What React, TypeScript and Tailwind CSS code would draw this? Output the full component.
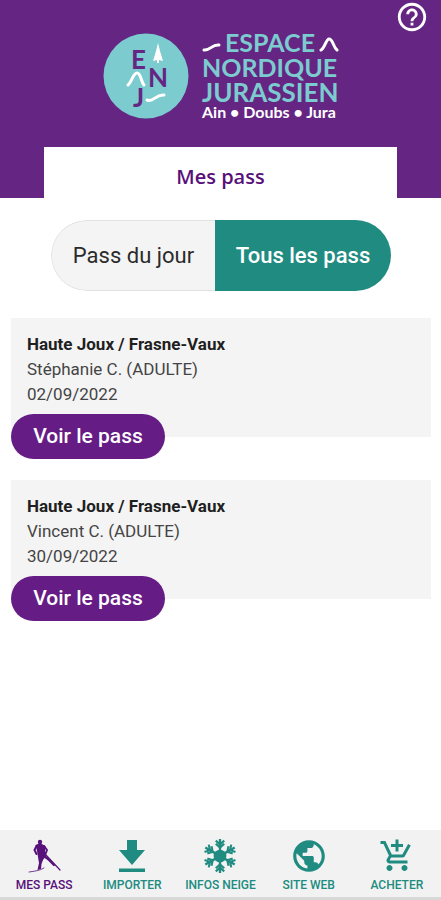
import type { ReactNode } from "react";
import { MdAddShoppingCart, MdHelpOutline, MdPublic } from "react-icons/md";

const passes = [
  { id: 1, area: "Haute Joux / Frasne-Vaux", holder: "Stéphanie C. (ADULTE)", date: "02/09/2022" },
  { id: 2, area: "Haute Joux / Frasne-Vaux", holder: "Vincent C. (ADULTE)", date: "30/09/2022" },
];

export default function App() {
  return (
    <div className="flex min-h-screen flex-col bg-white font-[Roboto,sans-serif]">
      <Header />
      <main className="flex-1 pt-[22px] pr-[10px] pb-6 pl-[11px]">
        <PassFilter />
        <div className="mt-[27px] flex flex-col gap-[21px]">
          {passes.map((pass) => (
            <PassCard key={pass.id} area={pass.area} holder={pass.holder} date={pass.date} />
          ))}
        </div>
      </main>
      <TabBar />
    </div>
  );
}

function Header() {
  return (
    <header className="relative flex flex-col items-center bg-[#652583] px-11 pt-[30px]">
      <button type="button" aria-label="Aide" className="absolute top-0 right-3 text-white">
        <MdHelpOutline size={34} />
      </button>
      <Logo />
      <h1 className="mt-[25px] w-full bg-white pt-[18px] pb-[9px] text-center font-['Open_Sans',sans-serif] text-[20px] leading-6 font-semibold text-[#58107a]">
        Mes pass
      </h1>
    </header>
  );
}

function Logo() {
  return (
    <div className="flex h-[92px] gap-3 font-[Lato,sans-serif] font-bold whitespace-nowrap">
      <Emblem />
      <div className="text-[25px] leading-[25px] text-[#7ccbcf]">
        <div className="flex items-start gap-1">
          <svg width="19" height="25" viewBox="0 0 19 25" fill="none" stroke="#fff" strokeWidth="3" strokeLinecap="round">
            <path d="M2 20 C8 21 10 14 17 15" />
          </svg>
          <span>ESPACE</span>
          <svg width="20" height="25" viewBox="0 0 20 25" fill="none" stroke="#fff" strokeWidth="3" strokeLinecap="round">
            <path d="M2 20 C6 18 7 9 10 9 C14 9 14 17 18 20" />
          </svg>
        </div>
        <div>NORDIQUE</div>
        <div className="text-[26px]">JURASSIEN</div>
        <div className="text-[16px] leading-[14px] text-white">Ain • Doubs • Jura</div>
      </div>
    </div>
  );
}

function Emblem() {
  return (
    <svg width="88" height="92" viewBox="0 0 88 92" fill="none">
      <circle cx="44" cy="46" r="42.5" fill="#7ccbcf" />
      <g fill="#652583" fontSize="26">
        <text x="29" y="39">E</text>
        <text x="46" y="57">N</text>
        <text x="31" y="77">J</text>
      </g>
      <path d="M56 13 L58 21 L61 31 L57 30 V33 H55 V30 L51 31 L54 21 Z" fill="#fff" />
      <g stroke="#fff" strokeWidth="3" strokeLinecap="round" strokeLinejoin="round">
        <path d="M26 55 C30 52 31 43 35 43 C39 43 39 52 42 55" />
        <path d="M45 70 C52 73 53 64 62 65" />
      </g>
    </svg>
  );
}

function PassFilter() {
  return (
    <div className="mx-10 flex h-[71px] overflow-hidden rounded-full text-[22px]">
      <button type="button" className="w-[164px] rounded-l-full border border-r-0 border-[#e2e2e2] bg-[#f4f4f4] text-[#2b2b2b]">
        Pass du jour
      </button>
      <button type="button" className="flex-1 bg-[#208b80] font-medium text-white">
        Tous les pass
      </button>
    </div>
  );
}

function PassCard({ area, holder, date }: { area: string; holder: string; date: string }) {
  return (
    <article>
      <div className="-mb-[23px] bg-[#f4f4f4] px-4 pt-[14px] pb-[30px] text-[17px] leading-[25px] text-[#444]">
        <h2 className="font-bold text-[#1f1f1f]">{area}</h2>
        <p>{holder}</p>
        <p>{date}</p>
      </div>
      <button type="button" className="relative h-[45px] w-[154px] rounded-full bg-[#651c84] text-[21px] font-medium text-white">
        Voir le pass
      </button>
    </article>
  );
}

function TabBar() {
  return (
    <nav className="grid grid-cols-5 border-b-[3px] border-[#d8d8d8] bg-[#f2f2f2] pt-2 pb-1">
      <Tab label="MES PASS" active>
        <SkierIcon />
      </Tab>
      <Tab label="IMPORTER">
        <ImportIcon />
      </Tab>
      <Tab label="INFOS NEIGE">
        <SnowflakeIcon />
      </Tab>
      <Tab label="SITE WEB">
        <MdPublic size={38} />
      </Tab>
      <Tab label="ACHETER">
        <MdAddShoppingCart size={36} />
      </Tab>
    </nav>
  );
}

function Tab({ label, active = false, children }: { label: string; active?: boolean; children: ReactNode }) {
  return (
    <a
      href="#"
      aria-current={active ? "page" : undefined}
      className={`flex flex-col items-center gap-[3px] text-[12px] leading-4 font-medium whitespace-nowrap ${
        active ? "text-[#58107a]" : "text-[#208b80]"
      }`}
    >
      <span className="flex h-[36px] items-center">{children}</span>
      {label}
    </a>
  );
}

function SkierIcon() {
  return (
    <svg width="34" height="34" viewBox="0 0 34 34" fill="none" stroke="currentColor" strokeLinecap="round" strokeLinejoin="round">
      <circle cx="13" cy="3" r="2.2" fill="currentColor" stroke="none" />
      <path d="M8.5 6 L13 4 L18.5 7 L18 13 L19 17 L16 21 L14.5 25 L14 30 L10.5 31 L12 24 L11 18 L10 12 Z" fill="currentColor" stroke="none" />
      <path d="M9.5 7 L7.5 11 L9.5 15" strokeWidth="2" />
      <path d="M17 7 L20 11 L18.5 15" strokeWidth="2" />
      <path d="M17 17 L21 20 L27 26" strokeWidth="2.2" />
      <path d="M19 16 L33 31" strokeWidth="1.2" />
      <path d="M2 33 C8 32 12 32 17 29" strokeWidth="0.8" />
    </svg>
  );
}

function ImportIcon() {
  return (
    <svg width="28" height="34" viewBox="0 0 28 34" fill="currentColor">
      <path d="M9 1 H19 V11 H27 L14 26 L1 11 H9 Z" />
      <path d="M1 29.5 H27 V33 H1 Z" />
    </svg>
  );
}

function SnowflakeIcon() {
  return (
    <svg width="34" height="34" viewBox="-16 -16 32 32" fill="none" stroke="currentColor" strokeWidth="2">
      <circle r="6" fill="currentColor" stroke="none" />
      {[0, 60, 120, 180, 240, 300].map((angle) => (
        <g key={angle} transform={`rotate(${angle})`}>
          <path d="M0 -4 V-16" strokeWidth="2.2" />
          <path d="M-4 -14.5 L0 -11 L4 -14.5 M-4 -11.5 L0 -8 L4 -11.5" />
        </g>
      ))}
    </svg>
  );
}
